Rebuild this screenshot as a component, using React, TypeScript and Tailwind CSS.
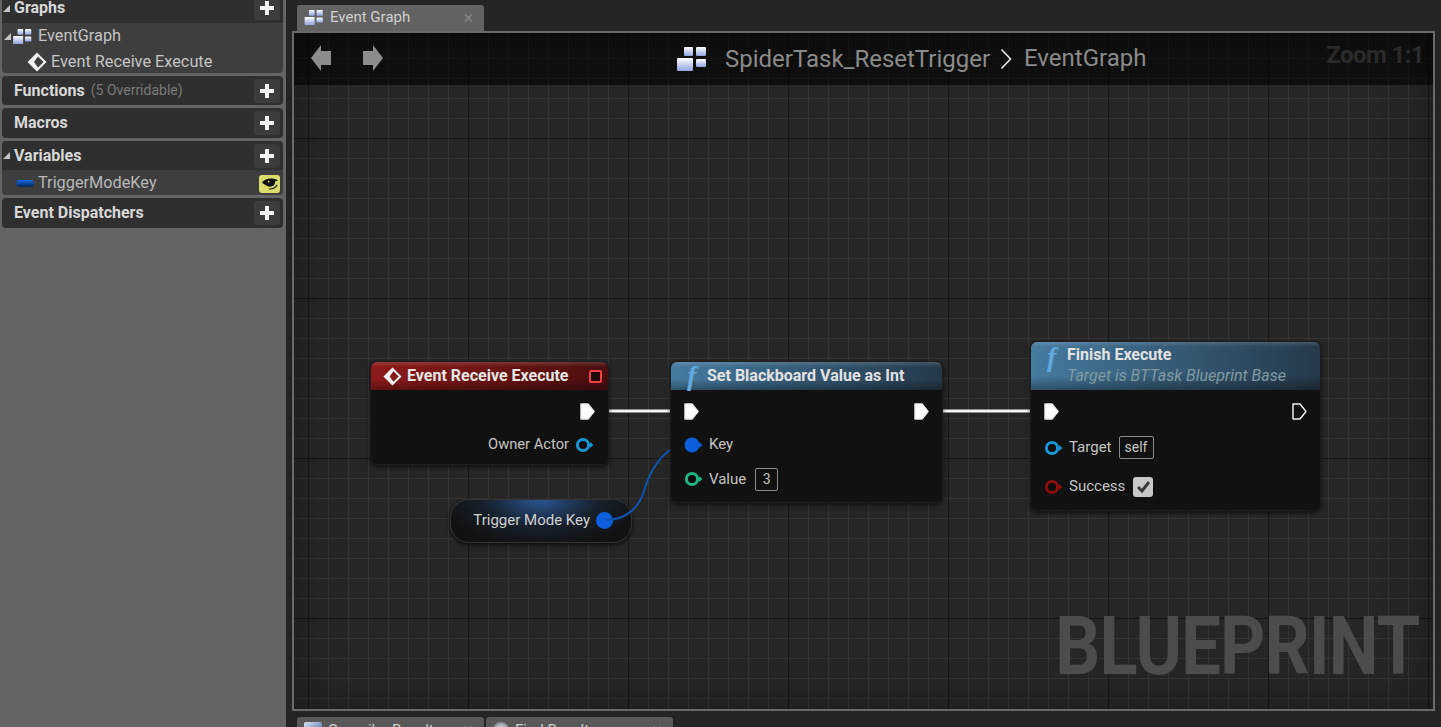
const font = "font-['Roboto',sans-serif]";

function GraphIcon({ className }: { className: string }) {
  return (
    <svg viewBox="0 0 30 24" className={className}>
      <defs>
        <linearGradient id="gi" x1="0" y1="0" x2="0" y2="1">
          <stop offset="0" stopColor="#ffffff" />
          <stop offset="1" stopColor="#8fa3dc" />
        </linearGradient>
      </defs>
      <rect x="7" y="0" width="9" height="9" rx="1" fill="url(#gi)" />
      <rect x="19" y="0" width="10" height="9" rx="1" fill="url(#gi)" />
      <rect x="0" y="11" width="16" height="13" rx="1" fill="url(#gi)" />
      <rect x="19" y="12" width="10" height="8" rx="1" fill="url(#gi)" />
    </svg>
  );
}

function EventIcon({ className }: { className: string }) {
  return (
    <svg viewBox="0 0 20 20" className={className}>
      <path
        fillRule="evenodd"
        d="M10 0.5 L19.5 10 L10 19.5 L0.5 10 Z M11 4.5 L16.5 10 L11 15.5 L7 10 Z"
        fill="#f2f2f2"
      />
    </svg>
  );
}

function ExecPin({ hollow }: { hollow?: boolean }) {
  return (
    <svg viewBox="0 0 15 17" className="w-[15px] h-[17px] shrink-0">
      <path
        d="M1 1 H8 L14 8.5 L8 16 H1 Z"
        fill={hollow ? "none" : "#ffffff"}
        stroke="#eeeeee"
        strokeWidth="1.5"
        strokeLinejoin="round"
      />
    </svg>
  );
}

function DataPin({ color, filled }: { color: string; filled?: boolean }) {
  return (
    <svg viewBox="0 0 19 16" className="w-[19px] h-[16px] shrink-0">
      <circle cx="8" cy="8" r={filled ? 7.5 : 5.6} fill={filled ? color : "#0d0d0d"} stroke={color} strokeWidth={filled ? 0 : 3} />
      <path d="M15 5 L18.5 8 L15 11 Z" fill={color} />
    </svg>
  );
}

function FunctionGlyph() {
  return <span className="font-['Liberation_Serif',serif] italic font-bold text-[28px] leading-[26px] text-[#62a8dc] w-[22px] shrink-0 pl-[2px]">f</span>;
}

function PlusButton() {
  return (
    <div className="w-[26px] h-[24px] bg-[#3c3c3c] rounded-[3px] flex items-center justify-center">
      <svg viewBox="0 0 14 14" className="w-[14px] h-[14px]">
        <path d="M5 0 H9 V5 H14 V9 H9 V14 H5 V9 H0 V5 H5 Z" fill="#f4f4f4" />
      </svg>
    </div>
  );
}

function Arrow() {
  return <span className="w-0 h-0 border-l-[7px] border-l-transparent border-b-[7px] border-b-[#c4c4c4] shrink-0" />;
}

function SectionHeader({ title, open, extra, height }: { title: string; open?: boolean; extra?: string; height: string }) {
  return (
    <div className={`${height} flex items-center justify-between pr-[3px] bg-[#2f2f2f]`}>
      <div className="flex items-center">
        <div className="w-[12px] flex pl-px">{open && <Arrow />}</div>
        <span className="text-[16px] font-bold text-[#d8d8d8]">{title}</span>
        {extra && <span className="ml-[6px] text-[14px] text-[#7a7a7a]">{extra}</span>}
      </div>
      <PlusButton />
    </div>
  );
}

function Sidebar() {
  return (
    <aside className="w-[286px] shrink-0 bg-[#646464] pl-[2px] pr-[3px] flex flex-col gap-[3px] items-stretch">
      <section className="rounded-b-[4px] overflow-hidden -mt-[7px]">
        <SectionHeader title="Graphs" open height="h-[30px]" />
        <div className="bg-[#3e3e3e] text-[#c4c4c4] text-[16.3px]">
          <div className="h-[25px] flex items-center pl-[2px] pt-[2px]">
            <Arrow />
            <GraphIcon className="w-[19px] h-[15px] ml-[2px] mr-[6px]" />
            EventGraph
          </div>
          <div className="h-[25px] flex items-center pl-[25px] pt-[3px]">
            <EventIcon className="w-[20px] h-[20px] mr-[4px]" />
            Event Receive Execute
          </div>
        </div>
      </section>
      <section className="rounded-[4px] overflow-hidden">
        <SectionHeader title="Functions" extra="(5 Overridable)" height="h-[29px]" />
      </section>
      <section className="rounded-[4px] overflow-hidden">
        <SectionHeader title="Macros" height="h-[30px]" />
      </section>
      <section className="rounded-[4px] overflow-hidden">
        <SectionHeader title="Variables" open height="h-[29px]" />
        <div className="h-[25px] bg-[#3e3e3e] flex items-center justify-between text-[#b8b8b8] text-[16.3px] pl-[14px] pr-[3px] pt-[2px]">
          <div className="flex items-center">
            <span className="w-[18px] h-[7px] rounded-full bg-linear-to-b from-[#1a6ee0] to-[#06245c] mr-[4px]" />
            TriggerModeKey
          </div>
          <div className="w-[21px] h-[18px] rounded-[3px] bg-[#dcdc6c] flex items-center justify-center">
            <svg viewBox="0 0 20 14" className="w-[18px] h-[13px]">
              <path d="M1 6 C5 0.5 13 0.5 19 3.5 L15.5 5 C16 8.5 13 10.5 10 10.5 C6.5 10.5 4 8.5 1 6 Z" fill="#111" />
              <circle cx="8.5" cy="5" r="1" fill="#dcdc6c" />
              <path d="M9 13 C13 13.5 16 11.5 18 8.5" fill="none" stroke="#111" strokeWidth="1.2" />
            </svg>
          </div>
        </div>
      </section>
      <section className="rounded-[4px] overflow-hidden">
        <SectionHeader title="Event Dispatchers" height="h-[30px]" />
      </section>
    </aside>
  );
}

function Tab({ label, icon, clipped }: { label: string; icon: React.ReactNode; clipped?: boolean }) {
  return (
    <div className={`w-[187px] h-[26px] ${clipped ? "bg-[#585858]" : "bg-[#626262] pb-px"} rounded-t-[3px] flex items-center pl-[7px] pr-[11px]`}>
      {icon}
      <span className="text-[15px] text-[#d0d0d0] ml-[6px] flex-1">{label}</span>
      <span className="text-[18px] leading-none text-[#828282]">×</span>
    </div>
  );
}

function Canvas() {
  return (
    <div className="relative h-[680px] mr-[6px] border-2 border-[#6a6a6a] overflow-hidden bg-[#262626] bg-[linear-gradient(#141414_0_1.5px,transparent_1.5px),linear-gradient(90deg,#171717_0_1.5px,transparent_1.5px),linear-gradient(#343434_0_1px,transparent_1px),linear-gradient(90deg,#343434_0_1px,transparent_1px)] bg-size-[160px_160px,160px_160px,20px_20px,20px_20px] bg-position-[0_105px,14px_0,0_5px,14px_0]">
      {/* edge vignette */}
      <div className="absolute inset-0 shadow-[inset_0_0_50px_#00000050]" />

      {/* breadcrumb bar */}
      <div className="absolute top-0 left-0 right-0 h-[52px] bg-black/60 flex items-center">
        <svg viewBox="0 0 22 28" className="absolute left-[16px] top-[11px] w-[22px] h-[28px]">
          <path d="M11 1 L1 14 L11 27 L11 21 L21 21 L21 7 L11 7 Z" fill="#8c8c8c" />
        </svg>
        <svg viewBox="0 0 22 28" className="absolute left-[68px] top-[11px] w-[22px] h-[28px]">
          <path d="M11 1 L21 14 L11 27 L11 21 L1 21 L1 7 L11 7 Z" fill="#8c8c8c" />
        </svg>
        <GraphIcon className="absolute left-[383px] top-[14px] w-[30px] h-[24px]" />
        <span className="absolute left-[431px] top-[9px] text-[24px] leading-[34px] text-[#8a8a8a]">SpiderTask_ResetTrigger</span>
        <svg viewBox="0 0 12 22" className="absolute left-[706px] top-[15px] w-[12px] h-[22px]">
          <path d="M1.5 1.5 L10.5 11 L1.5 20.5" fill="none" stroke="#e4e4e4" strokeWidth="1.7" />
        </svg>
        <span className="absolute left-[730px] top-[8px] text-[24px] leading-[34px] text-[#8a8a8a]">EventGraph</span>
        <span className="absolute right-[9px] top-[5px] text-[24px] leading-[34px] font-bold text-[#2a2a2a] tracking-[-0.6px]">Zoom 1:1</span>
      </div>

      <span className="absolute right-[14px] top-[565px] text-[82px] leading-[96px] font-bold text-[#4c4c4c] tracking-[-1px] scale-x-[0.86] origin-right">BLUEPRINT</span>

      <svg className="absolute inset-0 w-full h-full pointer-events-none" viewBox="0 0 1140 676">
        <path d="M300 378 H392" stroke="#f4f4f4" strokeWidth="3" fill="none" />
        <path d="M632 378 H752" stroke="#f4f4f4" strokeWidth="3" fill="none" />
      </svg>

      {/* Event Receive Execute */}
      <div className="absolute left-[76px] top-[328px] w-[239px] h-[104px] rounded-[7px] bg-[#111111] border border-[#1d1d1d] shadow-[0_2px_4px_#0009] overflow-hidden">
        <div className="h-[28px] bg-[linear-gradient(180deg,#ffffff26_0,transparent_18%,transparent_60%,#00000055_100%),linear-gradient(90deg,#8e1a1a,#4a0e0e)] flex items-center pl-[12px] pr-[6px]">
          <EventIcon className="w-[19px] h-[19px] mr-[5px]" />
          <span className="text-[16px] font-bold text-[#e6e6e6] flex-1">Event Receive Execute</span>
          <span className="w-[13px] h-[13px] rounded-[2px] border-2 border-[#f04040] bg-[#200808]" />
        </div>
        <div className="pt-[5px] text-[14.7px] text-[#c4c4c4]">
          <div className="h-[33px] flex items-center justify-end pr-[13px]">
            <ExecPin />
          </div>
          <div className="h-[33px] flex items-center justify-end pr-[14px]">
            Owner Actor
            <span className="ml-[6px]"><DataPin color="#1a94d6" /></span>
          </div>
        </div>
      </div>

      {/* Set Blackboard Value as Int */}
      <div className="absolute left-[376px] top-[328px] w-[273px] h-[142px] rounded-[7px] bg-[#111111] border border-[#1d1d1d] shadow-[0_2px_4px_#0009] overflow-hidden">
        <div className="h-[28px] bg-[linear-gradient(180deg,#ffffff26_0,transparent_18%,transparent_60%,#00000055_100%),linear-gradient(90deg,#467ba0,#25394a)] flex items-center pl-[14px]">
          <FunctionGlyph />
          <span className="text-[16px] font-bold text-[#e2e2e2]">Set Blackboard Value as Int</span>
        </div>
        <div className="pt-[5px] text-[15px] text-[#c4c4c4]">
          <div className="h-[33px] flex items-center justify-between px-[13px]">
            <ExecPin />
            <ExecPin />
          </div>
          <div className="h-[33px] flex items-center pl-[13px]">
            <DataPin color="#0d5fdc" filled />
            <span className="ml-[6px]">Key</span>
          </div>
          <div className="h-[36px] flex items-center pl-[13px]">
            <DataPin color="#1fb583" />
            <span className="ml-[6px]">Value</span>
            <span className="ml-[9px] w-[23px] h-[23px] rounded-[2px] border border-[#8a8a8a] flex items-center justify-center text-[14px]">3</span>
          </div>
        </div>
      </div>

      {/* Finish Execute */}
      <div className="absolute left-[736px] top-[308px] w-[291px] h-[170px] rounded-[7px] bg-[#111111] border border-[#1d1d1d] shadow-[0_2px_4px_#0009] overflow-hidden">
        <div className="h-[48px] bg-[linear-gradient(180deg,#ffffff26_0,transparent_10%,transparent_70%,#00000055_100%),linear-gradient(90deg,#467ba0,#25394a)] pl-[14px] flex items-start pt-[2px]">
          <FunctionGlyph />
          <div className="leading-[21px]">
            <div className="text-[16px] font-bold text-[#e2e2e2]">Finish Execute</div>
            <div className="text-[16px] italic text-[#7f9aa3]">Target is BTTask Blueprint Base</div>
          </div>
        </div>
        <div className="pt-[5px] text-[15px] text-[#c4c4c4]">
          <div className="h-[33px] flex items-center justify-between px-[13px]">
            <ExecPin />
            <ExecPin hollow />
          </div>
          <div className="h-[39px] flex items-center pl-[13px]">
            <DataPin color="#1a94d6" />
            <span className="ml-[6px]">Target</span>
            <span className="ml-[7px] w-[35px] h-[23px] rounded-[2px] border border-[#8a8a8a] flex items-center justify-center text-[14px]">self</span>
          </div>
          <div className="h-[39px] flex items-center pl-[13px]">
            <DataPin color="#8b0e0e" />
            <span className="ml-[6px]">Success</span>
            <span className="ml-[8px] w-[20px] h-[20px] rounded-[3px] bg-[#c8c8c8] flex items-center justify-center">
              <svg viewBox="0 0 16 16" className="w-[16px] h-[16px]">
                <path d="M3 8 L7 12 L14 3" fill="none" stroke="#3a3a3a" strokeWidth="3" />
              </svg>
            </span>
          </div>
        </div>
      </div>

      {/* Trigger Mode Key variable */}
      <div className="absolute left-[156px] top-[466px] w-[182px] h-[44px] rounded-[19px] bg-[radial-gradient(ellipse_at_50%_0%,#2a5590_0%,#16202c_45%,#111111_80%)] border border-[#333333] shadow-[0_2px_4px_#000a] flex items-center justify-end pr-[18px] pb-px text-[15px] text-[#d0d0d0]">
        Trigger Mode Key
        <span className="ml-[6px] w-[17px] h-[17px] rounded-full bg-[#0d5fdc]" />
      </div>

      {/* var pin to Key pin, runs over the pill */}
      <svg className="absolute inset-0 w-full h-full pointer-events-none" viewBox="0 0 1140 676">
        <path d="M312 487 C335 487 345 472 349 462 C355 442 362 428 376 417" stroke="#0f52b0" strokeWidth="2" fill="none" />
      </svg>
    </div>
  );
}

export default function App() {
  return (
    <div className={`${font} flex w-[1441px] h-[727px] overflow-hidden bg-[#242424]`}>
      <Sidebar />
      <main className="flex-1 pl-[6px] min-w-0">
        <div className="h-[31px] pt-[5px] pl-[5px]">
          <Tab label="Event Graph" icon={<GraphIcon className="w-[20px] h-[15px]" />} />
        </div>
        <Canvas />
        <div className="flex gap-[2px] pl-[5px] pt-[6px]">
          <Tab
            clipped
            label="Compiler Results"
            icon={<span className="w-[18px] h-[16px] rounded-[2px] bg-linear-to-br from-[#dfe6f5] to-[#3d5c9c]" />}
          />
          <Tab
            clipped
            label="Find Results"
            icon={<span className="w-[16px] h-[16px] rounded-full bg-radial from-[#ffffff] to-[#555566]" />}
          />
        </div>
      </main>
    </div>
  );
}
